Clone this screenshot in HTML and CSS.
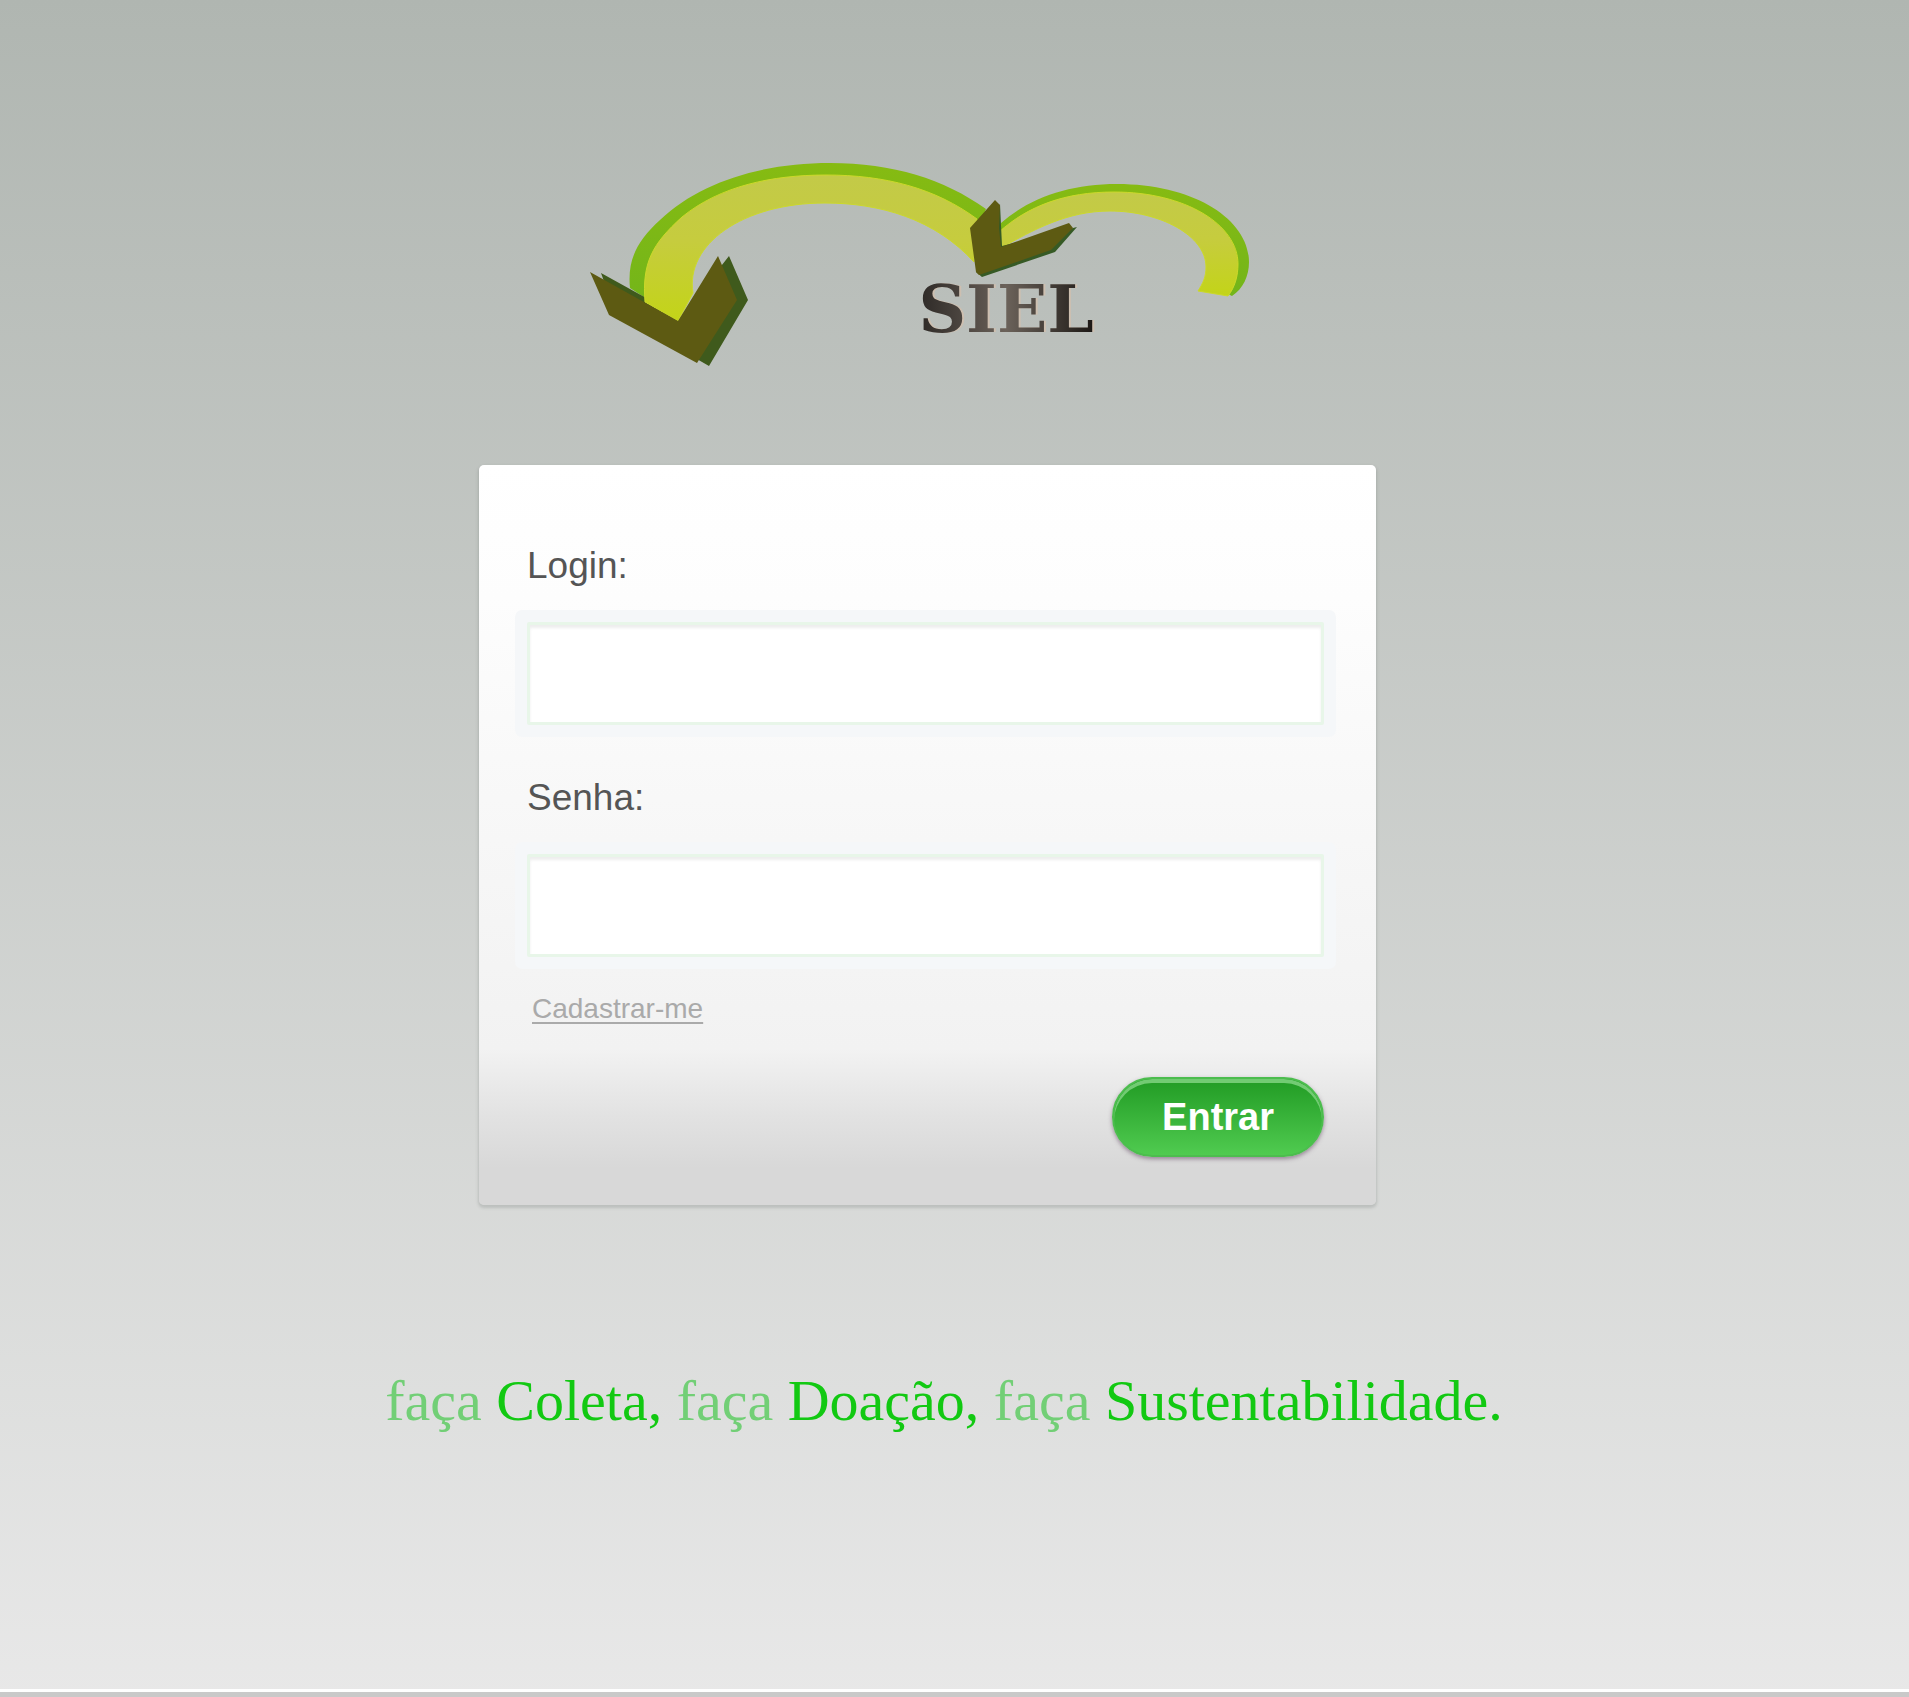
FILE: index.html
```html
<!DOCTYPE html>
<html lang="pt-BR">
<head>
  <meta charset="utf-8">
  <meta name="viewport" content="width=device-width, initial-scale=1">
  <title>SIEL</title>
  <link rel="stylesheet" href="styles.css">
</head>
<body>
  <main class="page">
    <svg class="logo" viewBox="580 155 680 220" role="img" aria-label="SIEL">
      <defs>
        <linearGradient id="band" x1="0" y1="0" x2="0" y2="1">
          <stop offset="0" stop-color="#c3ca48"/>
          <stop offset=".45" stop-color="#c6cc3e"/>
          <stop offset="1" stop-color="#c3d418"/>
        </linearGradient>
        <linearGradient id="edge" x1="0" y1="0" x2="0" y2="1">
          <stop offset="0" stop-color="#86bb12"/>
          <stop offset="1" stop-color="#73b51a"/>
        </linearGradient>
        <linearGradient id="metal" x1="0" y1="0" x2="1" y2="0">
          <stop offset="0" stop-color="#2d2926"/>
          <stop offset=".5" stop-color="#6b625a"/>
          <stop offset="1" stop-color="#1c1815"/>
        </linearGradient>
      </defs>
      <text class="logo-shade" x="1008" y="332">SIEL</text>
      <text class="logo-name" x="1006" y="332" fill="url(#metal)">SIEL</text>
      <!-- large arc and arrowhead -->
      <path fill="url(#edge)" d="M630 288C627 259 638 240 660 220C700 182 762 163 830 163C893 163 944 179 986 209L977 230C930 192 880 185 830 185C745 185 650 232 656 305Z"/>
      <path fill="#3f5a1c" d="M601 273L648 299L678 321L729 256L748 300L709 366L615 312Z"/>
      <path fill="url(#band)" stroke="#ccd92a" stroke-width="1" d="M645 302C642 263 652 244 682 217C720 186 772 175 826 175C885 175 935 188 977 219L974 262C935 219 880 203 825 203C742 203 685 245 693 293L678 321Z"/>
      <path fill="#5d5a12" d="M590 272L678 321L718 256L737 300L697 363L609 315Z"/>
      <!-- small arc and arrowhead -->
      <path fill="url(#edge)" d="M1001 223C1031 197 1070 184 1117 184C1195 184 1249 220 1249 262C1249 276 1243 289 1232 296L1220 290L1220 230L1150 202L1060 204L1001 240Z"/>
      <path fill="url(#band)" stroke="#ccd92a" stroke-width="1" d="M999 232C1028 206 1065 192 1114 192C1186 192 1238 225 1238 264C1238 276 1235 287 1228 296L1198 291C1203 283 1206 277 1206 267C1206 235 1159 211 1110 211C1067 211 1033 230 1001 248Z"/>
      <path fill="#365a25" d="M1000 204L1002 246L1077 227L1055 252L982 277L976 272Z"/>
      <path fill="#5d5a12" d="M995 200L1000 205L999 228L1001 247L1069 223L1073 228L1051 250L979 275L976 272L970 228Z"/>
    </svg>

    <form class="card">
      <div class="field">
        <label class="label" for="login">Login:</label>
        <input class="input" id="login" type="text" name="login">
      </div>
      <div class="field">
        <label class="label" for="senha">Senha:</label>
        <input class="input" id="senha" type="password" name="senha">
      </div>
      <a class="register" href="#">Cadastrar-me</a>
      <button class="submit" type="submit">Entrar</button>
    </form>

    <p class="tagline"><span class="verb">faça</span> Coleta, <span class="verb">faça</span> Doação, <span class="verb">faça</span> Sustentabilidade.</p>
  </main>
  <footer class="footer"></footer>
</body>
</html>
```
FILE: styles.css
```css
* {
  box-sizing: border-box;
}

body {
  display: flex;
  flex-direction: column;
  min-height: 100vh;
  margin: 0;
  background: linear-gradient(#b0b6b1, #e8e8e8);
  font-family: "Liberation Sans", Arial, sans-serif;
}

.page {
  display: flex;
  flex: 1;
  flex-direction: column;
  align-items: center;
  padding: 155px 54px 48px 0;
}

.logo {
  width: 680px;
  max-width: 100%;
  margin-right: 16px;
}

.logo-name,
.logo-shade {
  font-family: "DejaVu Serif", serif;
  font-size: 66px;
  font-weight: bold;
  text-anchor: middle;
}

.logo-shade {
  fill: #cdbfb0;
}

.card {
  display: flex;
  flex-direction: column;
  width: 100%;
  max-width: 897px;
  margin-top: 90px;
  padding: 79px 52px 48px 48px;
  border-radius: 5px;
  background: linear-gradient(#fff, #fdfdfd 18%, #f8f8f8 45%, #f2f2f2 79%, #e2e2e2 88%, #d8d8d8 95%, #d8d8d8);
  box-shadow: 0 2px 3px 1px rgba(90, 100, 95, .22);
}

.field {
  display: flex;
  flex-direction: column;
  gap: 34px;
}

.field + .field {
  margin-top: 51px;
}

.label {
  color: #555;
  font-size: 37px;
  line-height: 44px;
}

.input {
  width: 100%;
  height: 103px;
  padding: 0 20px;
  border: 3px solid #e8f6e9;
  border-radius: 2px;
  outline: none;
  background: #fff;
  box-shadow: 0 0 0 12px #f5f7f9, inset 0 3px 3px #eee;
  color: #555;
  font: inherit;
  font-size: 37px;
}

.register {
  align-self: flex-start;
  margin: 36px 0 0 5px;
  color: #aaa;
  font-size: 28px;
  line-height: 32px;
  text-decoration-thickness: 2px;
  text-underline-offset: 4px;
}

.submit {
  align-self: flex-end;
  height: 80px;
  margin-top: 52px;
  padding: 0 48px;
  border: 2px solid #4cbd4e;
  border-radius: 40px;
  background: linear-gradient(#219b24, #50cb50);
  box-shadow: 0 2px 4px rgba(80, 50, 80, .5), inset 0 4px 0 #72cb73;
  color: #fff;
  font: bold 38px/44px "Liberation Sans", Arial, sans-serif;
}

.tagline {
  margin: 160px 0 0 33px;
  color: #12c912;
  font-family: "Palatino Linotype", Palatino, "Liberation Serif", serif;
  font-size: 58px;
  line-height: 72px;
}

.verb {
  color: #72cf76;
}

.footer {
  height: 8px;
  border-top: 3px solid #fff;
  background: #c9c9c9;
}
```
